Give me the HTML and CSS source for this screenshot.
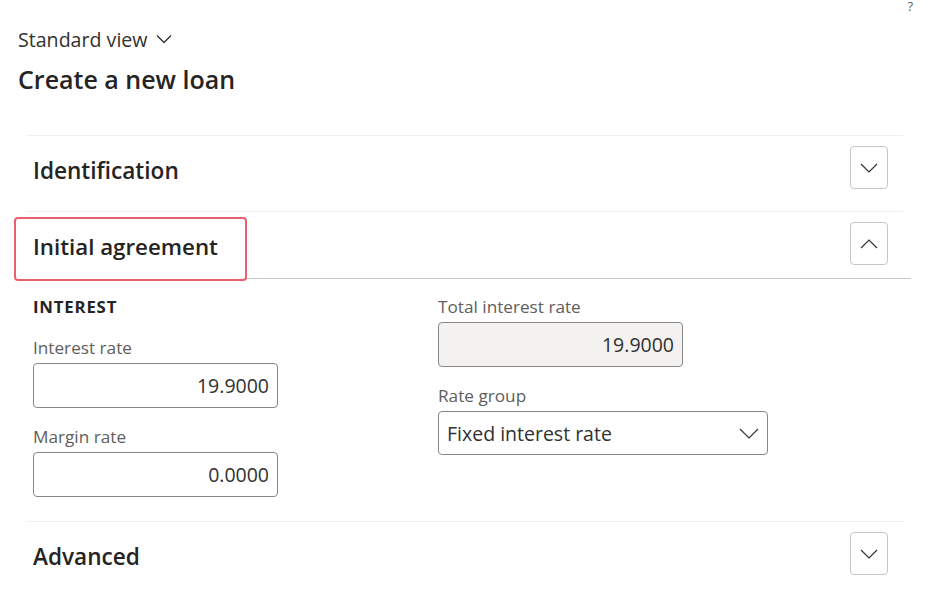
FILE: index.html
```html
<!DOCTYPE html>
<html lang="en">
<head>
<meta charset="utf-8">
<title>Create a new loan</title>
<link rel="stylesheet" href="styles.css">
</head>
<body>
<div class="topbar"><span class="help">?</span></div>
<main class="page">
  <div class="view">Standard view
    <svg class="view-chev" width="16" height="10" viewBox="0 0 16 10"><path d="M1 1.5 L8 8.5 L15 1.5" fill="none" stroke="#323130" stroke-width="1.3"/></svg>
  </div>
  <h1 class="title">Create a new loan</h1>

  <div class="sections">
    <section class="section">
      <div class="sec-head">
        <h2 class="sec-title">Identification</h2>
        <button class="toggle" aria-label="Expand"><svg width="18" height="10" viewBox="0 0 18 10"><path d="M1 1 L9 9 L17 1" fill="none" stroke="#323130" stroke-width="1.2"/></svg></button>
      </div>
    </section>

    <section class="section open">
      <div class="sec-head expanded">
        <h2 class="sec-title highlight">Initial agreement</h2>
        <button class="toggle" aria-label="Collapse"><svg width="18" height="10" viewBox="0 0 18 10"><path d="M1 9 L9 1 L17 9" fill="none" stroke="#323130" stroke-width="1.2"/></svg></button>
      </div>
      <div class="sec-body">
        <div class="col">
          <div class="group-title">INTEREST</div>
          <label class="field first">
            <span class="lbl">Interest rate</span>
            <span class="input num">19.9000</span>
          </label>
          <label class="field">
            <span class="lbl">Margin rate</span>
            <span class="input num">0.0000</span>
          </label>
        </div>
        <div class="col">
          <label class="field top">
            <span class="lbl">Total interest rate</span>
            <span class="input num readonly">19.9000</span>
          </label>
          <label class="field">
            <span class="lbl">Rate group</span>
            <span class="input select"><span>Fixed interest rate</span>
              <svg width="20" height="11" viewBox="0 0 20 11"><path d="M1 1 L10 10 L19 1" fill="none" stroke="#323130" stroke-width="1.2"/></svg>
            </span>
          </label>
        </div>
      </div>
    </section>

    <section class="section">
      <div class="sec-head">
        <h2 class="sec-title">Advanced</h2>
        <button class="toggle" aria-label="Expand"><svg width="18" height="10" viewBox="0 0 18 10"><path d="M1 1 L9 9 L17 1" fill="none" stroke="#323130" stroke-width="1.2"/></svg></button>
      </div>
    </section>
  </div>
</main>
</body>
</html>
```

FILE: styles.css
```css
* { box-sizing: border-box; }
html, body { margin: 0; padding: 0; background: #fff; }
body {
  font-family: "Open Sans", "Noto Sans", "Liberation Sans", sans-serif;
  color: #323130;
  width: 932px;
  height: 597px;
  overflow: hidden;
}
.topbar {
  height: 26px;
  display: flex;
  justify-content: flex-end;
  padding-right: 19px;
}
.help {
  font-size: 13px;
  line-height: 13px;
  color: #605e5c;
  margin-top: 0;
}
.page { padding-left: 18px; }
.view {
  display: flex;
  align-items: center;
  gap: 8px;
  font-size: 19.6px;
  line-height: 28px;
  height: 28px;
  color: #323130;
}
.view-chev { margin-top: -3px; }
.title {
  margin: 9px 0 0 0;
  font-size: 25px;
  line-height: 32px;
  font-weight: 600;
  color: #252423;
}
.sections {
  margin: 40px 0 0 9px;
  width: 876px;
}
.section { border-top: 1px solid #f0efee; }
.sec-head {
  display: flex;
  align-items: flex-start;
  justify-content: space-between;
  height: 75px;
  padding: 10px 15px 0 6px;
}
.sec-head.expanded {
  height: 67px;
  margin-right: -8px;
  padding-right: 23px;
  border-bottom: 1px solid #c8c6c4;
  align-items: flex-end;
}
.sec-head.expanded .toggle { align-self: flex-start; }
.sec-title {
  margin: 10px 0 0 0;
  font-size: 22.6px;
  line-height: 30px;
  font-weight: 600;
  color: #252423;
}
.sec-title.highlight {
  margin: 0 0 -3px -19px;
  width: 233px;
  height: 64px;
  padding: 13px 0 0 17px;
  border: 2px solid rgba(230, 55, 75, 0.8);
  border-radius: 4px;
  background: #fff;
  font-size: 22.3px;
  position: relative;
}
.toggle {
  width: 38px;
  height: 43px;
  border: 1px solid #c8c6c4;
  border-radius: 4px;
  background: #fff;
  display: flex;
  align-items: center;
  justify-content: center;
  padding: 0;
}
.sec-body {
  display: grid;
  grid-template-columns: 405px 330px;
  padding: 18px 0 24px 6px;
}
.col { display: flex; flex-direction: column; }
.group-title {
  font-size: 16.8px;
  line-height: 20px;
  font-weight: 700;
  color: #252423;
  letter-spacing: 0.8px;
}
.field { display: flex; flex-direction: column; margin-top: 19px; }
.field.first { margin-top: 21px; }
.field.top { margin-top: 0; }
.lbl {
  font-size: 17.2px;
  line-height: 20px;
  color: #605e5c;
  margin-bottom: 5px;
}
.input {
  height: 45px;
  width: 245px;
  border: 1px solid #8a8886;
  border-radius: 4px;
  font-size: 19.5px;
  color: #323130;
  display: flex;
  align-items: center;
}
.input.num { justify-content: flex-end; padding-right: 8px; }
.input.readonly { background: #f3f2f1; }
.input.select {
  width: 330px;
  height: 44px;
  justify-content: space-between;
  padding: 0 8px 0 8px;
}
```
